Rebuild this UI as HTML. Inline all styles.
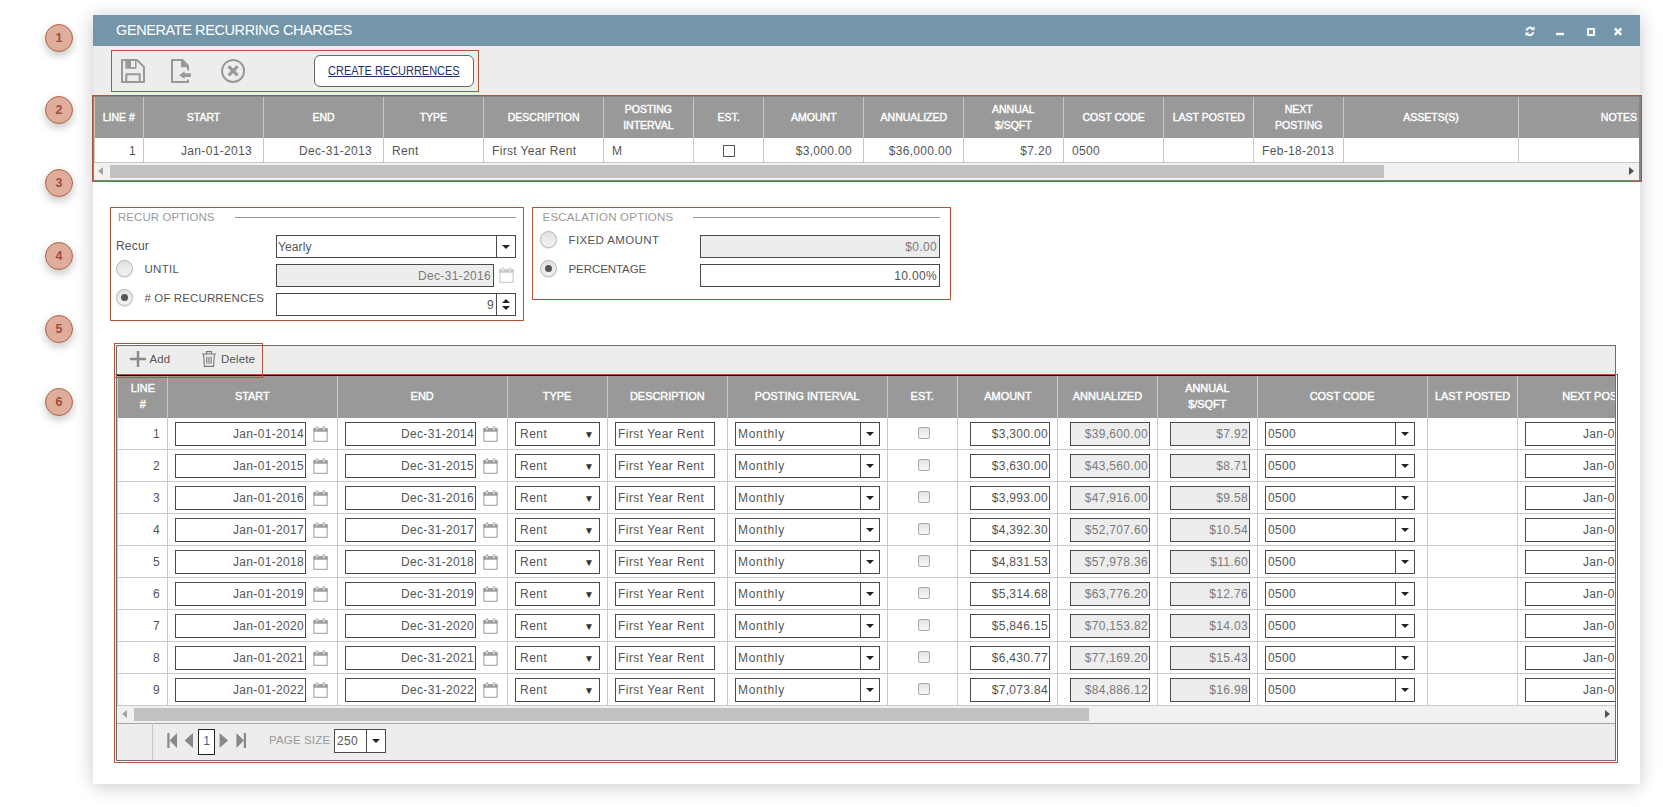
<!DOCTYPE html>
<html lang="en"><head><meta charset="utf-8"><title>Generate Recurring Charges</title>
<style>
*{box-sizing:border-box;margin:0;padding:0}
html,body{width:1663px;height:807px;overflow:hidden;background:#fff}
body{position:relative;font-family:"Liberation Sans",sans-serif;font-size:13px;color:#555555}
.abs{position:absolute}
.circ{position:absolute;left:45px;width:28px;height:28px;border-radius:50%;background:#dfad9c;border:1.5px solid #b0644a;
  color:#a04e34;font-size:12.5px;font-weight:bold;text-align:center;line-height:27px;box-shadow:0 4px 9px rgba(0,0,0,.22)}
#win{position:absolute;left:93px;top:15px;width:1547px;height:769px;background:#fff;box-shadow:0 2px 18px rgba(0,0,0,.22)}
#title{position:absolute;left:93px;top:15px;width:1547px;height:31px;background:#7396ab;color:#fff}
#title .t{position:absolute;left:23px;top:0;line-height:31px;font-size:14.5px;letter-spacing:-0.4px;white-space:nowrap}
#tbar{position:absolute;left:93px;top:46px;width:1547px;height:50px;background:#ededed}
.obox{position:absolute;border:1px solid #ad563b}
.btn{position:absolute;left:314px;top:55px;width:160px;height:32px;border:1px solid #666;border-radius:6px;background:#fff;
  text-align:center;line-height:30px;font-size:12px;color:#26336b;text-decoration:underline;white-space:nowrap}
/* grid 1 */
.g1h{position:absolute;top:0;height:41px;background:#999999;color:#fff;font-size:11px;font-weight:bold;text-align:center;
  border-left:1px solid #c9c9c9;display:flex;align-items:center;justify-content:center;line-height:16px;white-space:nowrap;overflow:hidden}
.g1c{position:absolute;top:41px;height:25px;background:#fff;border-left:1px solid #c9c9c9;border-bottom:1px solid #c9c9c9;
  line-height:27px;font-size:12px;white-space:nowrap;overflow:hidden;padding:0 8px}
.r{text-align:right}
.g1h span{display:inline-block;transform:scaleX(.955);position:relative;top:-1px;font-weight:normal;-webkit-text-stroke:.42px #fff}
.g2h span{display:inline-block;transform:scaleX(.95);position:relative;top:-1px;font-size:11.5px;font-weight:normal;-webkit-text-stroke:.42px #fff}
.ls{letter-spacing:.33px}
/* fieldsets */
.leg{position:absolute;font-size:11.5px;color:#999;letter-spacing:.05px;white-space:nowrap;line-height:14px}
.hl{position:absolute;height:1px;background:#999}
.lab{position:absolute;font-size:11.5px;letter-spacing:.12px;white-space:nowrap;line-height:14px;color:#555}
.radio{position:absolute;width:17px;height:17px;border-radius:50%;border:1px solid #b5b5b5;background:linear-gradient(#e2e2e2,#f3f3f3);box-shadow:0 1px 1px rgba(0,0,0,.12)}
.radio.on:after{content:"";position:absolute;left:4px;top:4px;width:7px;height:7px;border-radius:50%;background:#555}
.inp{position:absolute;height:23px;border:1px solid #4a4a4a;background:#fff;font-size:12px;line-height:22px;white-space:nowrap;overflow:hidden;padding:0 2px}
.inp.dis{background:#ededed;color:#7a7a7a}
.dd{position:absolute;right:0;top:0;width:19px;height:100%;border-left:1px solid #4a4a4a;background:#fff}
.dd:after{content:"";position:absolute;left:50%;top:50%;margin:-2px 0 0 -4px;border:4px solid transparent;border-top:4.5px solid #222;border-bottom:0}
.dd.sp:after{margin:-6px 0 0 -4px;border:4px solid transparent;border-bottom:4.5px solid #222;border-top:0}
.dd.sp:before{content:"";position:absolute;left:50%;top:50%;margin:1.5px 0 0 -4px;border:4px solid transparent;border-top:4.5px solid #222;border-bottom:0}
/* grid 2 */
.g2c .inp{height:24px;line-height:23px;padding:0 1px 0 2px}
.g2h{position:absolute;top:0;height:42px;background:#999999;color:#fff;font-size:11px;font-weight:bold;text-align:center;
  border-left:1px solid #c9c9c9;display:flex;align-items:center;justify-content:center;line-height:16px;white-space:nowrap;overflow:hidden}
.g2c{position:absolute;height:32px;background:#fff;border-left:1px solid #c9c9c9;border-bottom:1px solid #c9c9c9;
  line-height:33px;font-size:12px;white-space:nowrap;overflow:hidden}
.cal{position:absolute;width:15px;height:16px}
.cb{position:absolute;width:12px;height:12px;border:1px solid #a8a8a8;border-radius:2px;background:linear-gradient(#e4e4e4,#f6f6f6)}
.tri{position:absolute;font-size:10px;line-height:10px;color:#333}
</style></head>
<body>
<div class="circ" style="top:24px">1</div>
<div class="circ" style="top:96px">2</div>
<div class="circ" style="top:169px">3</div>
<div class="circ" style="top:242px">4</div>
<div class="circ" style="top:315px">5</div>
<div class="circ" style="top:388px">6</div>
<div id="win"></div>
<div id="title"><span class="t">GENERATE RECURRING CHARGES</span>
<svg class="abs" style="left:1420px;top:0" width="127" height="31" viewBox="0 0 127 31" fill="none" stroke="#f6f6f6"><path d="M13.6 15.6a3.6 3.6 0 0 1 6.3-1.6M20.4 17.2a3.6 3.6 0 0 1-6.3 1.6" stroke-width="2.1"/><path d="M21.6 11.2v4h-4zM12.4 21.6v-4h4z" fill="#f6f6f6" stroke="none"/><path d="M43 19h8" stroke-width="2.4"/><rect x="75" y="14" width="6" height="6" stroke-width="2.1"/><path d="M101.8 13.3l6.6 6.6M108.4 13.3l-6.6 6.6" stroke-width="2.5"/></svg>
</div>
<div id="tbar"></div>
<div class="obox" style="left:111px;top:50px;width:368px;height:42px"></div>
<svg class="abs" style="left:120px;top:58px" width="130" height="26" viewBox="0 0 130 26" fill="none" stroke="#999" stroke-width="2"><path d="M2 2h15l7 7v15H2z" stroke-linejoin="round"/><path d="M5.3 1.5h11.2v8.2a1 1 0 0 1-1 1H6.3a1 1 0 0 1-1-1z" fill="#999" stroke="none"/><rect x="11" y="3" width="4" height="6" fill="#ededed" stroke="none"/><path d="M6.3 24.5v-8.3h13.4v8.3" stroke-linejoin="round"/><path d="M68 12.6V8l-6-6H52v22h16v-2.6"/><path d="M61 1h1.6l6.4 6.4V9.2h-8z" fill="#999" stroke="none"/><path d="M59.2 17.2l5.4-3.9v2h6.3v3.8h-6.3v2z" fill="#999" stroke="none"/><circle cx="113.1" cy="12.9" r="11"/><path d="M108.6 8.4l9 9M117.6 8.4l-9 9" stroke-width="3.2"/></svg>
<div class="btn"><span style="display:inline-block;transform:scaleX(.915);text-decoration:underline">CREATE RECURRENCES</span></div>
<div class="abs" style="left:93px;top:96px;width:1548px;height:85px;border:1px solid #858585;border-right-width:2px"></div>
<div class="abs" id="g1" style="left:94px;top:97px;width:1545px;height:83px;overflow:hidden;background:#f1f1f1">
<div class="g1h" style="left:0px;width:49px"><span>LINE #</span></div><div class="g1h" style="left:49px;width:120px"><span>START</span></div><div class="g1h" style="left:169px;width:120px"><span>END</span></div><div class="g1h" style="left:289px;width:100px"><span>TYPE</span></div><div class="g1h" style="left:389px;width:120px"><span>DESCRIPTION</span></div><div class="g1h" style="left:509px;width:90px"><span>POSTING<br>INTERVAL</span></div><div class="g1h" style="left:599px;width:70px"><span>EST.</span></div><div class="g1h" style="left:669px;width:100px"><span>AMOUNT</span></div><div class="g1h" style="left:769px;width:100px"><span>ANNUALIZED</span></div><div class="g1h" style="left:869px;width:100px"><span>ANNUAL<br>$/SQFT</span></div><div class="g1h" style="left:969px;width:100px"><span>COST CODE</span></div><div class="g1h" style="left:1069px;width:90px"><span>LAST POSTED</span></div><div class="g1h" style="left:1159px;width:90px"><span>NEXT<br>POSTING</span></div><div class="g1h" style="left:1249px;width:175px"><span>ASSETS(S)</span></div><div class="g1h" style="left:1424px;width:200px"><span>NOTES</span></div>
<div class="g1c r" style="left:0px;width:49px;padding-right:7px"><span class="ls">1</span></div><div class="g1c r" style="left:49px;width:120px;padding-right:11px"><span class="ls">Jan-01-2013</span></div><div class="g1c r" style="left:169px;width:120px;padding-right:11px"><span class="ls">Dec-31-2013</span></div><div class="g1c" style="left:289px;width:100px"><span class="ls">Rent</span></div><div class="g1c" style="left:389px;width:120px"><span class="ls">First Year Rent</span></div><div class="g1c" style="left:509px;width:90px"><span class="ls">M</span></div><div class="g1c" style="left:599px;width:70px"><span class="abs" style="left:29px;top:7px;width:12px;height:12px;border:1px solid #555;background:#fff"></span></div><div class="g1c r" style="left:669px;width:100px;padding-right:11px"><span class="ls">$3,000.00</span></div><div class="g1c r" style="left:769px;width:100px;padding-right:11px"><span class="ls">$36,000.00</span></div><div class="g1c r" style="left:869px;width:100px;padding-right:11px"><span class="ls">$7.20</span></div><div class="g1c" style="left:969px;width:100px"><span class="ls">0500</span></div><div class="g1c" style="left:1069px;width:90px"></div><div class="g1c" style="left:1159px;width:90px"><span class="ls">Feb-18-2013</span></div><div class="g1c" style="left:1249px;width:175px"></div><div class="g1c" style="left:1424px;width:200px"></div>
<div class="abs" style="left:16px;top:68px;width:1274px;height:13px;background:#c1c1c1"></div><div class="abs" style="left:4px;top:70px;border:4px solid transparent;border-right:5px solid #a3a3a3;border-left:0"></div><div class="abs" style="left:1535px;top:70px;border:4px solid transparent;border-left:5px solid #505050;border-right:0"></div></div>
<div class="obox" style="left:92px;top:95px;width:1550px;height:87px"></div>
<div class="obox" style="left:110px;top:207px;width:414px;height:114px"></div>
<div class="leg" style="left:118px;top:210px">RECUR OPTIONS</div><div class="hl" style="left:235px;top:217px;width:281px"></div>
<div class="abs" style="left:116px;top:238px;font-size:12px;letter-spacing:.2px;line-height:16px">Recur</div>
<div class="inp" style="left:276px;top:235px;width:240px"><span style="letter-spacing:.1px;margin-left:-1px">Yearly</span><span class="dd"></span></div>
<div class="radio" style="left:116px;top:260px"></div><div class="lab" style="left:144.5px;top:262px;letter-spacing:.32px">UNTIL</div>
<div class="inp dis r" style="left:276px;top:264px;width:218px"><span class="ls">Dec-31-2016</span></div>
<svg class="cal" style="left:498.5px;top:267px" viewBox="0 0 15 16" fill="none" stroke="#c6c6c6" stroke-width="1"><rect x="0.9" y="2.9" width="13.2" height="12.4"/><rect x="0.4" y="2.4" width="14.2" height="3.3" fill="#c6c6c6" stroke="none"/><rect x="2.9" y="0.6" width="2" height="4" rx="1" fill="#fff" stroke-width=".9"/><rect x="9.9" y="0.6" width="2" height="4" rx="1" fill="#fff" stroke-width=".9"/></svg>
<div class="radio on" style="left:116px;top:289px"></div><div class="lab" style="left:144.5px;top:291px"># OF RECURRENCES</div>
<div class="inp r" style="left:276px;top:293px;width:240px;padding-right:21px"><span class="ls">9</span><span class="dd sp"></span></div>
<div class="obox" style="left:532px;top:206.6px;width:419px;height:93.4px"></div>
<div class="leg" style="left:542.5px;top:210px;letter-spacing:.22px">ESCALATION OPTIONS</div><div class="hl" style="left:693px;top:217px;width:247px"></div>
<div class="radio" style="left:540px;top:231px"></div><div class="lab" style="left:568.5px;top:233px;letter-spacing:.38px">FIXED AMOUNT</div>
<div class="inp dis r" style="left:700px;top:235px;width:240px"><span class="ls">$0.00</span></div>
<div class="radio on" style="left:540px;top:260px"></div><div class="lab" style="left:568.5px;top:262px;letter-spacing:-.08px">PERCENTAGE</div>
<div class="inp r" style="left:700px;top:264px;width:240px"><span class="ls">10.00%</span></div>
<div class="abs" style="left:116px;top:345px;width:1500px;height:416px;border:1px solid #6e6e6e;background:#ededed"></div>
<div class="abs" id="g2" style="left:117px;top:346px;width:1498px;height:414px;overflow:hidden">
<svg class="abs" style="left:12px;top:4px" width="18" height="18" viewBox="0 0 18 18" stroke="#8a8a8a" stroke-width="2.5" fill="none"><path d="M9 1v16M1 9h16"/></svg><div class="abs" style="left:32.5px;top:5px;line-height:16px;font-size:11.5px;letter-spacing:.15px">Add</div><svg class="abs" style="left:84px;top:4px" width="16" height="18" viewBox="0 0 16 18" stroke="#777" stroke-width="1.1" fill="none"><path d="M1 4h14M5.5 3.8V1.6h5v2.2"/><path d="M2.6 4.2l.8 12.2h9.2l.8-12.2"/><path d="M5.8 6.8v7M8 6.8v7M10.2 6.8v7"/></svg><div class="abs" style="left:104px;top:5px;line-height:16px;font-size:11.5px;letter-spacing:.15px">Delete</div>
<div class="abs" style="left:0;top:30px;width:1498px;height:42px"><div class="g2h" style="left:0px;width:50px"><span>LINE<br>#</span></div><div class="g2h" style="left:50px;width:170px"><span>START</span></div><div class="g2h" style="left:220px;width:170px"><span>END</span></div><div class="g2h" style="left:390px;width:100px"><span>TYPE</span></div><div class="g2h" style="left:490px;width:120px"><span>DESCRIPTION</span></div><div class="g2h" style="left:610px;width:160px"><span>POSTING INTERVAL</span></div><div class="g2h" style="left:770px;width:70px"><span>EST.</span></div><div class="g2h" style="left:840px;width:100px"><span>AMOUNT</span></div><div class="g2h" style="left:940px;width:100px"><span>ANNUALIZED</span></div><div class="g2h" style="left:1040px;width:100px"><span>ANNUAL<br>$/SQFT</span></div><div class="g2h" style="left:1140px;width:170px"><span>COST CODE</span></div><div class="g2h" style="left:1310px;width:90px"><span>LAST POSTED</span></div><div class="g2h" style="left:1400px;width:170px"><span>NEXT POSTING</span></div></div>
<div class="abs" style="left:0;top:72px;width:1498px;height:32px"><div class="g2c" style="left:0px;width:50px"><div class="r ls" style="padding-right:7px">1</div></div><div class="g2c" style="left:50px;width:170px"><div class="inp r" style="left:7px;top:4px;width:131px"><span class="ls">Jan-01-2014</span></div><svg class="cal" style="left:144.5px;top:8px" viewBox="0 0 15 16" fill="none" stroke="#9a9a9a" stroke-width="1"><rect x="0.9" y="2.9" width="13.2" height="12.4"/><rect x="0.4" y="2.4" width="14.2" height="3.3" fill="#9a9a9a" stroke="none"/><rect x="2.9" y="0.6" width="2" height="4" rx="1" fill="#fff" stroke-width=".9"/><rect x="9.9" y="0.6" width="2" height="4" rx="1" fill="#fff" stroke-width=".9"/></svg></div><div class="g2c" style="left:220px;width:170px"><div class="inp r" style="left:7px;top:4px;width:131px"><span class="ls">Dec-31-2014</span></div><svg class="cal" style="left:144.5px;top:8px" viewBox="0 0 15 16" fill="none" stroke="#9a9a9a" stroke-width="1"><rect x="0.9" y="2.9" width="13.2" height="12.4"/><rect x="0.4" y="2.4" width="14.2" height="3.3" fill="#9a9a9a" stroke="none"/><rect x="2.9" y="0.6" width="2" height="4" rx="1" fill="#fff" stroke-width=".9"/><rect x="9.9" y="0.6" width="2" height="4" rx="1" fill="#fff" stroke-width=".9"/></svg></div><div class="g2c" style="left:390px;width:100px"><div class="inp" style="left:7px;top:4px;width:85px;padding-left:4px"><span style="letter-spacing:.5px">Rent</span><span class="tri" style="left:68px;top:7px">&#9660;</span></div></div><div class="g2c" style="left:490px;width:120px"><div class="inp" style="left:7px;top:4px;width:100px"><span style="letter-spacing:.46px">First Year Rent</span></div></div><div class="g2c" style="left:610px;width:160px"><div class="inp" style="left:7px;top:4px;width:145px"><span style="letter-spacing:.7px">Monthly</span><span class="dd"></span></div></div><div class="g2c" style="left:770px;width:70px"><div class="cb" style="left:30px;top:9px"></div></div><div class="g2c" style="left:840px;width:100px"><div class="inp r" style="left:12px;top:4px;width:80px"><span class="ls">$3,300.00</span></div></div><div class="g2c" style="left:940px;width:100px"><div class="inp dis r" style="left:12px;top:4px;width:80px"><span class="ls">$39,600.00</span></div></div><div class="g2c" style="left:1040px;width:100px"><div class="inp dis r" style="left:12px;top:4px;width:80px"><span class="ls">$7.92</span></div></div><div class="g2c" style="left:1140px;width:170px"><div class="inp" style="left:7px;top:4px;width:150px"><span class="ls">0500</span><span class="dd"></span></div></div><div class="g2c" style="left:1310px;width:90px"></div><div class="g2c" style="left:1400px;width:170px"><div class="inp r" style="left:7px;top:4px;width:131px"><span class="ls">Jan-01-2014</span></div><svg class="cal" style="left:144.5px;top:8px" viewBox="0 0 15 16" fill="none" stroke="#9a9a9a" stroke-width="1"><rect x="0.9" y="2.9" width="13.2" height="12.4"/><rect x="0.4" y="2.4" width="14.2" height="3.3" fill="#9a9a9a" stroke="none"/><rect x="2.9" y="0.6" width="2" height="4" rx="1" fill="#fff" stroke-width=".9"/><rect x="9.9" y="0.6" width="2" height="4" rx="1" fill="#fff" stroke-width=".9"/></svg></div></div>
<div class="abs" style="left:0;top:104px;width:1498px;height:32px"><div class="g2c" style="left:0px;width:50px"><div class="r ls" style="padding-right:7px">2</div></div><div class="g2c" style="left:50px;width:170px"><div class="inp r" style="left:7px;top:4px;width:131px"><span class="ls">Jan-01-2015</span></div><svg class="cal" style="left:144.5px;top:8px" viewBox="0 0 15 16" fill="none" stroke="#9a9a9a" stroke-width="1"><rect x="0.9" y="2.9" width="13.2" height="12.4"/><rect x="0.4" y="2.4" width="14.2" height="3.3" fill="#9a9a9a" stroke="none"/><rect x="2.9" y="0.6" width="2" height="4" rx="1" fill="#fff" stroke-width=".9"/><rect x="9.9" y="0.6" width="2" height="4" rx="1" fill="#fff" stroke-width=".9"/></svg></div><div class="g2c" style="left:220px;width:170px"><div class="inp r" style="left:7px;top:4px;width:131px"><span class="ls">Dec-31-2015</span></div><svg class="cal" style="left:144.5px;top:8px" viewBox="0 0 15 16" fill="none" stroke="#9a9a9a" stroke-width="1"><rect x="0.9" y="2.9" width="13.2" height="12.4"/><rect x="0.4" y="2.4" width="14.2" height="3.3" fill="#9a9a9a" stroke="none"/><rect x="2.9" y="0.6" width="2" height="4" rx="1" fill="#fff" stroke-width=".9"/><rect x="9.9" y="0.6" width="2" height="4" rx="1" fill="#fff" stroke-width=".9"/></svg></div><div class="g2c" style="left:390px;width:100px"><div class="inp" style="left:7px;top:4px;width:85px;padding-left:4px"><span style="letter-spacing:.5px">Rent</span><span class="tri" style="left:68px;top:7px">&#9660;</span></div></div><div class="g2c" style="left:490px;width:120px"><div class="inp" style="left:7px;top:4px;width:100px"><span style="letter-spacing:.46px">First Year Rent</span></div></div><div class="g2c" style="left:610px;width:160px"><div class="inp" style="left:7px;top:4px;width:145px"><span style="letter-spacing:.7px">Monthly</span><span class="dd"></span></div></div><div class="g2c" style="left:770px;width:70px"><div class="cb" style="left:30px;top:9px"></div></div><div class="g2c" style="left:840px;width:100px"><div class="inp r" style="left:12px;top:4px;width:80px"><span class="ls">$3,630.00</span></div></div><div class="g2c" style="left:940px;width:100px"><div class="inp dis r" style="left:12px;top:4px;width:80px"><span class="ls">$43,560.00</span></div></div><div class="g2c" style="left:1040px;width:100px"><div class="inp dis r" style="left:12px;top:4px;width:80px"><span class="ls">$8.71</span></div></div><div class="g2c" style="left:1140px;width:170px"><div class="inp" style="left:7px;top:4px;width:150px"><span class="ls">0500</span><span class="dd"></span></div></div><div class="g2c" style="left:1310px;width:90px"></div><div class="g2c" style="left:1400px;width:170px"><div class="inp r" style="left:7px;top:4px;width:131px"><span class="ls">Jan-01-2015</span></div><svg class="cal" style="left:144.5px;top:8px" viewBox="0 0 15 16" fill="none" stroke="#9a9a9a" stroke-width="1"><rect x="0.9" y="2.9" width="13.2" height="12.4"/><rect x="0.4" y="2.4" width="14.2" height="3.3" fill="#9a9a9a" stroke="none"/><rect x="2.9" y="0.6" width="2" height="4" rx="1" fill="#fff" stroke-width=".9"/><rect x="9.9" y="0.6" width="2" height="4" rx="1" fill="#fff" stroke-width=".9"/></svg></div></div>
<div class="abs" style="left:0;top:136px;width:1498px;height:32px"><div class="g2c" style="left:0px;width:50px"><div class="r ls" style="padding-right:7px">3</div></div><div class="g2c" style="left:50px;width:170px"><div class="inp r" style="left:7px;top:4px;width:131px"><span class="ls">Jan-01-2016</span></div><svg class="cal" style="left:144.5px;top:8px" viewBox="0 0 15 16" fill="none" stroke="#9a9a9a" stroke-width="1"><rect x="0.9" y="2.9" width="13.2" height="12.4"/><rect x="0.4" y="2.4" width="14.2" height="3.3" fill="#9a9a9a" stroke="none"/><rect x="2.9" y="0.6" width="2" height="4" rx="1" fill="#fff" stroke-width=".9"/><rect x="9.9" y="0.6" width="2" height="4" rx="1" fill="#fff" stroke-width=".9"/></svg></div><div class="g2c" style="left:220px;width:170px"><div class="inp r" style="left:7px;top:4px;width:131px"><span class="ls">Dec-31-2016</span></div><svg class="cal" style="left:144.5px;top:8px" viewBox="0 0 15 16" fill="none" stroke="#9a9a9a" stroke-width="1"><rect x="0.9" y="2.9" width="13.2" height="12.4"/><rect x="0.4" y="2.4" width="14.2" height="3.3" fill="#9a9a9a" stroke="none"/><rect x="2.9" y="0.6" width="2" height="4" rx="1" fill="#fff" stroke-width=".9"/><rect x="9.9" y="0.6" width="2" height="4" rx="1" fill="#fff" stroke-width=".9"/></svg></div><div class="g2c" style="left:390px;width:100px"><div class="inp" style="left:7px;top:4px;width:85px;padding-left:4px"><span style="letter-spacing:.5px">Rent</span><span class="tri" style="left:68px;top:7px">&#9660;</span></div></div><div class="g2c" style="left:490px;width:120px"><div class="inp" style="left:7px;top:4px;width:100px"><span style="letter-spacing:.46px">First Year Rent</span></div></div><div class="g2c" style="left:610px;width:160px"><div class="inp" style="left:7px;top:4px;width:145px"><span style="letter-spacing:.7px">Monthly</span><span class="dd"></span></div></div><div class="g2c" style="left:770px;width:70px"><div class="cb" style="left:30px;top:9px"></div></div><div class="g2c" style="left:840px;width:100px"><div class="inp r" style="left:12px;top:4px;width:80px"><span class="ls">$3,993.00</span></div></div><div class="g2c" style="left:940px;width:100px"><div class="inp dis r" style="left:12px;top:4px;width:80px"><span class="ls">$47,916.00</span></div></div><div class="g2c" style="left:1040px;width:100px"><div class="inp dis r" style="left:12px;top:4px;width:80px"><span class="ls">$9.58</span></div></div><div class="g2c" style="left:1140px;width:170px"><div class="inp" style="left:7px;top:4px;width:150px"><span class="ls">0500</span><span class="dd"></span></div></div><div class="g2c" style="left:1310px;width:90px"></div><div class="g2c" style="left:1400px;width:170px"><div class="inp r" style="left:7px;top:4px;width:131px"><span class="ls">Jan-01-2016</span></div><svg class="cal" style="left:144.5px;top:8px" viewBox="0 0 15 16" fill="none" stroke="#9a9a9a" stroke-width="1"><rect x="0.9" y="2.9" width="13.2" height="12.4"/><rect x="0.4" y="2.4" width="14.2" height="3.3" fill="#9a9a9a" stroke="none"/><rect x="2.9" y="0.6" width="2" height="4" rx="1" fill="#fff" stroke-width=".9"/><rect x="9.9" y="0.6" width="2" height="4" rx="1" fill="#fff" stroke-width=".9"/></svg></div></div>
<div class="abs" style="left:0;top:168px;width:1498px;height:32px"><div class="g2c" style="left:0px;width:50px"><div class="r ls" style="padding-right:7px">4</div></div><div class="g2c" style="left:50px;width:170px"><div class="inp r" style="left:7px;top:4px;width:131px"><span class="ls">Jan-01-2017</span></div><svg class="cal" style="left:144.5px;top:8px" viewBox="0 0 15 16" fill="none" stroke="#9a9a9a" stroke-width="1"><rect x="0.9" y="2.9" width="13.2" height="12.4"/><rect x="0.4" y="2.4" width="14.2" height="3.3" fill="#9a9a9a" stroke="none"/><rect x="2.9" y="0.6" width="2" height="4" rx="1" fill="#fff" stroke-width=".9"/><rect x="9.9" y="0.6" width="2" height="4" rx="1" fill="#fff" stroke-width=".9"/></svg></div><div class="g2c" style="left:220px;width:170px"><div class="inp r" style="left:7px;top:4px;width:131px"><span class="ls">Dec-31-2017</span></div><svg class="cal" style="left:144.5px;top:8px" viewBox="0 0 15 16" fill="none" stroke="#9a9a9a" stroke-width="1"><rect x="0.9" y="2.9" width="13.2" height="12.4"/><rect x="0.4" y="2.4" width="14.2" height="3.3" fill="#9a9a9a" stroke="none"/><rect x="2.9" y="0.6" width="2" height="4" rx="1" fill="#fff" stroke-width=".9"/><rect x="9.9" y="0.6" width="2" height="4" rx="1" fill="#fff" stroke-width=".9"/></svg></div><div class="g2c" style="left:390px;width:100px"><div class="inp" style="left:7px;top:4px;width:85px;padding-left:4px"><span style="letter-spacing:.5px">Rent</span><span class="tri" style="left:68px;top:7px">&#9660;</span></div></div><div class="g2c" style="left:490px;width:120px"><div class="inp" style="left:7px;top:4px;width:100px"><span style="letter-spacing:.46px">First Year Rent</span></div></div><div class="g2c" style="left:610px;width:160px"><div class="inp" style="left:7px;top:4px;width:145px"><span style="letter-spacing:.7px">Monthly</span><span class="dd"></span></div></div><div class="g2c" style="left:770px;width:70px"><div class="cb" style="left:30px;top:9px"></div></div><div class="g2c" style="left:840px;width:100px"><div class="inp r" style="left:12px;top:4px;width:80px"><span class="ls">$4,392.30</span></div></div><div class="g2c" style="left:940px;width:100px"><div class="inp dis r" style="left:12px;top:4px;width:80px"><span class="ls">$52,707.60</span></div></div><div class="g2c" style="left:1040px;width:100px"><div class="inp dis r" style="left:12px;top:4px;width:80px"><span class="ls">$10.54</span></div></div><div class="g2c" style="left:1140px;width:170px"><div class="inp" style="left:7px;top:4px;width:150px"><span class="ls">0500</span><span class="dd"></span></div></div><div class="g2c" style="left:1310px;width:90px"></div><div class="g2c" style="left:1400px;width:170px"><div class="inp r" style="left:7px;top:4px;width:131px"><span class="ls">Jan-01-2017</span></div><svg class="cal" style="left:144.5px;top:8px" viewBox="0 0 15 16" fill="none" stroke="#9a9a9a" stroke-width="1"><rect x="0.9" y="2.9" width="13.2" height="12.4"/><rect x="0.4" y="2.4" width="14.2" height="3.3" fill="#9a9a9a" stroke="none"/><rect x="2.9" y="0.6" width="2" height="4" rx="1" fill="#fff" stroke-width=".9"/><rect x="9.9" y="0.6" width="2" height="4" rx="1" fill="#fff" stroke-width=".9"/></svg></div></div>
<div class="abs" style="left:0;top:200px;width:1498px;height:32px"><div class="g2c" style="left:0px;width:50px"><div class="r ls" style="padding-right:7px">5</div></div><div class="g2c" style="left:50px;width:170px"><div class="inp r" style="left:7px;top:4px;width:131px"><span class="ls">Jan-01-2018</span></div><svg class="cal" style="left:144.5px;top:8px" viewBox="0 0 15 16" fill="none" stroke="#9a9a9a" stroke-width="1"><rect x="0.9" y="2.9" width="13.2" height="12.4"/><rect x="0.4" y="2.4" width="14.2" height="3.3" fill="#9a9a9a" stroke="none"/><rect x="2.9" y="0.6" width="2" height="4" rx="1" fill="#fff" stroke-width=".9"/><rect x="9.9" y="0.6" width="2" height="4" rx="1" fill="#fff" stroke-width=".9"/></svg></div><div class="g2c" style="left:220px;width:170px"><div class="inp r" style="left:7px;top:4px;width:131px"><span class="ls">Dec-31-2018</span></div><svg class="cal" style="left:144.5px;top:8px" viewBox="0 0 15 16" fill="none" stroke="#9a9a9a" stroke-width="1"><rect x="0.9" y="2.9" width="13.2" height="12.4"/><rect x="0.4" y="2.4" width="14.2" height="3.3" fill="#9a9a9a" stroke="none"/><rect x="2.9" y="0.6" width="2" height="4" rx="1" fill="#fff" stroke-width=".9"/><rect x="9.9" y="0.6" width="2" height="4" rx="1" fill="#fff" stroke-width=".9"/></svg></div><div class="g2c" style="left:390px;width:100px"><div class="inp" style="left:7px;top:4px;width:85px;padding-left:4px"><span style="letter-spacing:.5px">Rent</span><span class="tri" style="left:68px;top:7px">&#9660;</span></div></div><div class="g2c" style="left:490px;width:120px"><div class="inp" style="left:7px;top:4px;width:100px"><span style="letter-spacing:.46px">First Year Rent</span></div></div><div class="g2c" style="left:610px;width:160px"><div class="inp" style="left:7px;top:4px;width:145px"><span style="letter-spacing:.7px">Monthly</span><span class="dd"></span></div></div><div class="g2c" style="left:770px;width:70px"><div class="cb" style="left:30px;top:9px"></div></div><div class="g2c" style="left:840px;width:100px"><div class="inp r" style="left:12px;top:4px;width:80px"><span class="ls">$4,831.53</span></div></div><div class="g2c" style="left:940px;width:100px"><div class="inp dis r" style="left:12px;top:4px;width:80px"><span class="ls">$57,978.36</span></div></div><div class="g2c" style="left:1040px;width:100px"><div class="inp dis r" style="left:12px;top:4px;width:80px"><span class="ls">$11.60</span></div></div><div class="g2c" style="left:1140px;width:170px"><div class="inp" style="left:7px;top:4px;width:150px"><span class="ls">0500</span><span class="dd"></span></div></div><div class="g2c" style="left:1310px;width:90px"></div><div class="g2c" style="left:1400px;width:170px"><div class="inp r" style="left:7px;top:4px;width:131px"><span class="ls">Jan-01-2018</span></div><svg class="cal" style="left:144.5px;top:8px" viewBox="0 0 15 16" fill="none" stroke="#9a9a9a" stroke-width="1"><rect x="0.9" y="2.9" width="13.2" height="12.4"/><rect x="0.4" y="2.4" width="14.2" height="3.3" fill="#9a9a9a" stroke="none"/><rect x="2.9" y="0.6" width="2" height="4" rx="1" fill="#fff" stroke-width=".9"/><rect x="9.9" y="0.6" width="2" height="4" rx="1" fill="#fff" stroke-width=".9"/></svg></div></div>
<div class="abs" style="left:0;top:232px;width:1498px;height:32px"><div class="g2c" style="left:0px;width:50px"><div class="r ls" style="padding-right:7px">6</div></div><div class="g2c" style="left:50px;width:170px"><div class="inp r" style="left:7px;top:4px;width:131px"><span class="ls">Jan-01-2019</span></div><svg class="cal" style="left:144.5px;top:8px" viewBox="0 0 15 16" fill="none" stroke="#9a9a9a" stroke-width="1"><rect x="0.9" y="2.9" width="13.2" height="12.4"/><rect x="0.4" y="2.4" width="14.2" height="3.3" fill="#9a9a9a" stroke="none"/><rect x="2.9" y="0.6" width="2" height="4" rx="1" fill="#fff" stroke-width=".9"/><rect x="9.9" y="0.6" width="2" height="4" rx="1" fill="#fff" stroke-width=".9"/></svg></div><div class="g2c" style="left:220px;width:170px"><div class="inp r" style="left:7px;top:4px;width:131px"><span class="ls">Dec-31-2019</span></div><svg class="cal" style="left:144.5px;top:8px" viewBox="0 0 15 16" fill="none" stroke="#9a9a9a" stroke-width="1"><rect x="0.9" y="2.9" width="13.2" height="12.4"/><rect x="0.4" y="2.4" width="14.2" height="3.3" fill="#9a9a9a" stroke="none"/><rect x="2.9" y="0.6" width="2" height="4" rx="1" fill="#fff" stroke-width=".9"/><rect x="9.9" y="0.6" width="2" height="4" rx="1" fill="#fff" stroke-width=".9"/></svg></div><div class="g2c" style="left:390px;width:100px"><div class="inp" style="left:7px;top:4px;width:85px;padding-left:4px"><span style="letter-spacing:.5px">Rent</span><span class="tri" style="left:68px;top:7px">&#9660;</span></div></div><div class="g2c" style="left:490px;width:120px"><div class="inp" style="left:7px;top:4px;width:100px"><span style="letter-spacing:.46px">First Year Rent</span></div></div><div class="g2c" style="left:610px;width:160px"><div class="inp" style="left:7px;top:4px;width:145px"><span style="letter-spacing:.7px">Monthly</span><span class="dd"></span></div></div><div class="g2c" style="left:770px;width:70px"><div class="cb" style="left:30px;top:9px"></div></div><div class="g2c" style="left:840px;width:100px"><div class="inp r" style="left:12px;top:4px;width:80px"><span class="ls">$5,314.68</span></div></div><div class="g2c" style="left:940px;width:100px"><div class="inp dis r" style="left:12px;top:4px;width:80px"><span class="ls">$63,776.20</span></div></div><div class="g2c" style="left:1040px;width:100px"><div class="inp dis r" style="left:12px;top:4px;width:80px"><span class="ls">$12.76</span></div></div><div class="g2c" style="left:1140px;width:170px"><div class="inp" style="left:7px;top:4px;width:150px"><span class="ls">0500</span><span class="dd"></span></div></div><div class="g2c" style="left:1310px;width:90px"></div><div class="g2c" style="left:1400px;width:170px"><div class="inp r" style="left:7px;top:4px;width:131px"><span class="ls">Jan-01-2019</span></div><svg class="cal" style="left:144.5px;top:8px" viewBox="0 0 15 16" fill="none" stroke="#9a9a9a" stroke-width="1"><rect x="0.9" y="2.9" width="13.2" height="12.4"/><rect x="0.4" y="2.4" width="14.2" height="3.3" fill="#9a9a9a" stroke="none"/><rect x="2.9" y="0.6" width="2" height="4" rx="1" fill="#fff" stroke-width=".9"/><rect x="9.9" y="0.6" width="2" height="4" rx="1" fill="#fff" stroke-width=".9"/></svg></div></div>
<div class="abs" style="left:0;top:264px;width:1498px;height:32px"><div class="g2c" style="left:0px;width:50px"><div class="r ls" style="padding-right:7px">7</div></div><div class="g2c" style="left:50px;width:170px"><div class="inp r" style="left:7px;top:4px;width:131px"><span class="ls">Jan-01-2020</span></div><svg class="cal" style="left:144.5px;top:8px" viewBox="0 0 15 16" fill="none" stroke="#9a9a9a" stroke-width="1"><rect x="0.9" y="2.9" width="13.2" height="12.4"/><rect x="0.4" y="2.4" width="14.2" height="3.3" fill="#9a9a9a" stroke="none"/><rect x="2.9" y="0.6" width="2" height="4" rx="1" fill="#fff" stroke-width=".9"/><rect x="9.9" y="0.6" width="2" height="4" rx="1" fill="#fff" stroke-width=".9"/></svg></div><div class="g2c" style="left:220px;width:170px"><div class="inp r" style="left:7px;top:4px;width:131px"><span class="ls">Dec-31-2020</span></div><svg class="cal" style="left:144.5px;top:8px" viewBox="0 0 15 16" fill="none" stroke="#9a9a9a" stroke-width="1"><rect x="0.9" y="2.9" width="13.2" height="12.4"/><rect x="0.4" y="2.4" width="14.2" height="3.3" fill="#9a9a9a" stroke="none"/><rect x="2.9" y="0.6" width="2" height="4" rx="1" fill="#fff" stroke-width=".9"/><rect x="9.9" y="0.6" width="2" height="4" rx="1" fill="#fff" stroke-width=".9"/></svg></div><div class="g2c" style="left:390px;width:100px"><div class="inp" style="left:7px;top:4px;width:85px;padding-left:4px"><span style="letter-spacing:.5px">Rent</span><span class="tri" style="left:68px;top:7px">&#9660;</span></div></div><div class="g2c" style="left:490px;width:120px"><div class="inp" style="left:7px;top:4px;width:100px"><span style="letter-spacing:.46px">First Year Rent</span></div></div><div class="g2c" style="left:610px;width:160px"><div class="inp" style="left:7px;top:4px;width:145px"><span style="letter-spacing:.7px">Monthly</span><span class="dd"></span></div></div><div class="g2c" style="left:770px;width:70px"><div class="cb" style="left:30px;top:9px"></div></div><div class="g2c" style="left:840px;width:100px"><div class="inp r" style="left:12px;top:4px;width:80px"><span class="ls">$5,846.15</span></div></div><div class="g2c" style="left:940px;width:100px"><div class="inp dis r" style="left:12px;top:4px;width:80px"><span class="ls">$70,153.82</span></div></div><div class="g2c" style="left:1040px;width:100px"><div class="inp dis r" style="left:12px;top:4px;width:80px"><span class="ls">$14.03</span></div></div><div class="g2c" style="left:1140px;width:170px"><div class="inp" style="left:7px;top:4px;width:150px"><span class="ls">0500</span><span class="dd"></span></div></div><div class="g2c" style="left:1310px;width:90px"></div><div class="g2c" style="left:1400px;width:170px"><div class="inp r" style="left:7px;top:4px;width:131px"><span class="ls">Jan-01-2020</span></div><svg class="cal" style="left:144.5px;top:8px" viewBox="0 0 15 16" fill="none" stroke="#9a9a9a" stroke-width="1"><rect x="0.9" y="2.9" width="13.2" height="12.4"/><rect x="0.4" y="2.4" width="14.2" height="3.3" fill="#9a9a9a" stroke="none"/><rect x="2.9" y="0.6" width="2" height="4" rx="1" fill="#fff" stroke-width=".9"/><rect x="9.9" y="0.6" width="2" height="4" rx="1" fill="#fff" stroke-width=".9"/></svg></div></div>
<div class="abs" style="left:0;top:296px;width:1498px;height:32px"><div class="g2c" style="left:0px;width:50px"><div class="r ls" style="padding-right:7px">8</div></div><div class="g2c" style="left:50px;width:170px"><div class="inp r" style="left:7px;top:4px;width:131px"><span class="ls">Jan-01-2021</span></div><svg class="cal" style="left:144.5px;top:8px" viewBox="0 0 15 16" fill="none" stroke="#9a9a9a" stroke-width="1"><rect x="0.9" y="2.9" width="13.2" height="12.4"/><rect x="0.4" y="2.4" width="14.2" height="3.3" fill="#9a9a9a" stroke="none"/><rect x="2.9" y="0.6" width="2" height="4" rx="1" fill="#fff" stroke-width=".9"/><rect x="9.9" y="0.6" width="2" height="4" rx="1" fill="#fff" stroke-width=".9"/></svg></div><div class="g2c" style="left:220px;width:170px"><div class="inp r" style="left:7px;top:4px;width:131px"><span class="ls">Dec-31-2021</span></div><svg class="cal" style="left:144.5px;top:8px" viewBox="0 0 15 16" fill="none" stroke="#9a9a9a" stroke-width="1"><rect x="0.9" y="2.9" width="13.2" height="12.4"/><rect x="0.4" y="2.4" width="14.2" height="3.3" fill="#9a9a9a" stroke="none"/><rect x="2.9" y="0.6" width="2" height="4" rx="1" fill="#fff" stroke-width=".9"/><rect x="9.9" y="0.6" width="2" height="4" rx="1" fill="#fff" stroke-width=".9"/></svg></div><div class="g2c" style="left:390px;width:100px"><div class="inp" style="left:7px;top:4px;width:85px;padding-left:4px"><span style="letter-spacing:.5px">Rent</span><span class="tri" style="left:68px;top:7px">&#9660;</span></div></div><div class="g2c" style="left:490px;width:120px"><div class="inp" style="left:7px;top:4px;width:100px"><span style="letter-spacing:.46px">First Year Rent</span></div></div><div class="g2c" style="left:610px;width:160px"><div class="inp" style="left:7px;top:4px;width:145px"><span style="letter-spacing:.7px">Monthly</span><span class="dd"></span></div></div><div class="g2c" style="left:770px;width:70px"><div class="cb" style="left:30px;top:9px"></div></div><div class="g2c" style="left:840px;width:100px"><div class="inp r" style="left:12px;top:4px;width:80px"><span class="ls">$6,430.77</span></div></div><div class="g2c" style="left:940px;width:100px"><div class="inp dis r" style="left:12px;top:4px;width:80px"><span class="ls">$77,169.20</span></div></div><div class="g2c" style="left:1040px;width:100px"><div class="inp dis r" style="left:12px;top:4px;width:80px"><span class="ls">$15.43</span></div></div><div class="g2c" style="left:1140px;width:170px"><div class="inp" style="left:7px;top:4px;width:150px"><span class="ls">0500</span><span class="dd"></span></div></div><div class="g2c" style="left:1310px;width:90px"></div><div class="g2c" style="left:1400px;width:170px"><div class="inp r" style="left:7px;top:4px;width:131px"><span class="ls">Jan-01-2021</span></div><svg class="cal" style="left:144.5px;top:8px" viewBox="0 0 15 16" fill="none" stroke="#9a9a9a" stroke-width="1"><rect x="0.9" y="2.9" width="13.2" height="12.4"/><rect x="0.4" y="2.4" width="14.2" height="3.3" fill="#9a9a9a" stroke="none"/><rect x="2.9" y="0.6" width="2" height="4" rx="1" fill="#fff" stroke-width=".9"/><rect x="9.9" y="0.6" width="2" height="4" rx="1" fill="#fff" stroke-width=".9"/></svg></div></div>
<div class="abs" style="left:0;top:328px;width:1498px;height:32px"><div class="g2c" style="left:0px;width:50px"><div class="r ls" style="padding-right:7px">9</div></div><div class="g2c" style="left:50px;width:170px"><div class="inp r" style="left:7px;top:4px;width:131px"><span class="ls">Jan-01-2022</span></div><svg class="cal" style="left:144.5px;top:8px" viewBox="0 0 15 16" fill="none" stroke="#9a9a9a" stroke-width="1"><rect x="0.9" y="2.9" width="13.2" height="12.4"/><rect x="0.4" y="2.4" width="14.2" height="3.3" fill="#9a9a9a" stroke="none"/><rect x="2.9" y="0.6" width="2" height="4" rx="1" fill="#fff" stroke-width=".9"/><rect x="9.9" y="0.6" width="2" height="4" rx="1" fill="#fff" stroke-width=".9"/></svg></div><div class="g2c" style="left:220px;width:170px"><div class="inp r" style="left:7px;top:4px;width:131px"><span class="ls">Dec-31-2022</span></div><svg class="cal" style="left:144.5px;top:8px" viewBox="0 0 15 16" fill="none" stroke="#9a9a9a" stroke-width="1"><rect x="0.9" y="2.9" width="13.2" height="12.4"/><rect x="0.4" y="2.4" width="14.2" height="3.3" fill="#9a9a9a" stroke="none"/><rect x="2.9" y="0.6" width="2" height="4" rx="1" fill="#fff" stroke-width=".9"/><rect x="9.9" y="0.6" width="2" height="4" rx="1" fill="#fff" stroke-width=".9"/></svg></div><div class="g2c" style="left:390px;width:100px"><div class="inp" style="left:7px;top:4px;width:85px;padding-left:4px"><span style="letter-spacing:.5px">Rent</span><span class="tri" style="left:68px;top:7px">&#9660;</span></div></div><div class="g2c" style="left:490px;width:120px"><div class="inp" style="left:7px;top:4px;width:100px"><span style="letter-spacing:.46px">First Year Rent</span></div></div><div class="g2c" style="left:610px;width:160px"><div class="inp" style="left:7px;top:4px;width:145px"><span style="letter-spacing:.7px">Monthly</span><span class="dd"></span></div></div><div class="g2c" style="left:770px;width:70px"><div class="cb" style="left:30px;top:9px"></div></div><div class="g2c" style="left:840px;width:100px"><div class="inp r" style="left:12px;top:4px;width:80px"><span class="ls">$7,073.84</span></div></div><div class="g2c" style="left:940px;width:100px"><div class="inp dis r" style="left:12px;top:4px;width:80px"><span class="ls">$84,886.12</span></div></div><div class="g2c" style="left:1040px;width:100px"><div class="inp dis r" style="left:12px;top:4px;width:80px"><span class="ls">$16.98</span></div></div><div class="g2c" style="left:1140px;width:170px"><div class="inp" style="left:7px;top:4px;width:150px"><span class="ls">0500</span><span class="dd"></span></div></div><div class="g2c" style="left:1310px;width:90px"></div><div class="g2c" style="left:1400px;width:170px"><div class="inp r" style="left:7px;top:4px;width:131px"><span class="ls">Jan-01-2022</span></div><svg class="cal" style="left:144.5px;top:8px" viewBox="0 0 15 16" fill="none" stroke="#9a9a9a" stroke-width="1"><rect x="0.9" y="2.9" width="13.2" height="12.4"/><rect x="0.4" y="2.4" width="14.2" height="3.3" fill="#9a9a9a" stroke="none"/><rect x="2.9" y="0.6" width="2" height="4" rx="1" fill="#fff" stroke-width=".9"/><rect x="9.9" y="0.6" width="2" height="4" rx="1" fill="#fff" stroke-width=".9"/></svg></div></div>
<div class="abs" style="left:0;top:360px;width:1498px;height:17px;background:#f1f1f1"></div><div class="abs" style="left:17px;top:362px;width:955px;height:13px;background:#c1c1c1"></div><div class="abs" style="left:5px;top:364px;border:4px solid transparent;border-right:5px solid #a3a3a3;border-left:0"></div><div class="abs" style="left:1488px;top:364px;border:4px solid transparent;border-left:5px solid #505050;border-right:0"></div>
<div class="abs" style="left:0;top:377px;width:1498px;height:37px;background:#ededed;border-top:1px solid #a6a6a6"></div><div class="abs" style="left:35px;top:377px;width:1px;height:37px;background:#c9c9c9"></div><svg class="abs" style="left:48px;top:386px" width="84" height="17" viewBox="0 0 84 17" fill="#888"><path d="M2.3 1h2.2v15H2.3zM12 1v15L4.6 8.5z"/><path d="M28 1v15L19.6 8.5z"/><path d="M54.6 1v15L63 8.5z"/><path d="M71.4 1v15l7.4-7.5zM78.8 1H81v15h-2.2z"/></svg><div class="abs" style="left:81px;top:383px;width:17px;height:26px;border:1.5px solid #222;background:#fff;text-align:center;line-height:23px;font-size:12px;color:#2d6a99">1</div><div class="abs" style="left:152px;top:387px;font-size:11.5px;letter-spacing:.15px;color:#999;line-height:14px;white-space:nowrap">PAGE SIZE</div><div class="inp" style="left:217px;top:383px;width:52px;height:24px;line-height:22px"><span class="ls">250</span><span class="dd"></span></div>
</div>
<div class="abs" style="left:117px;top:375px;width:1498px;height:1px;background:#0a0a0a"></div>
<div class="obox" style="left:114px;top:374px;width:1504px;height:389px"></div>
<div class="obox" style="left:114px;top:343px;width:149px;height:35px"></div>
</body></html>
